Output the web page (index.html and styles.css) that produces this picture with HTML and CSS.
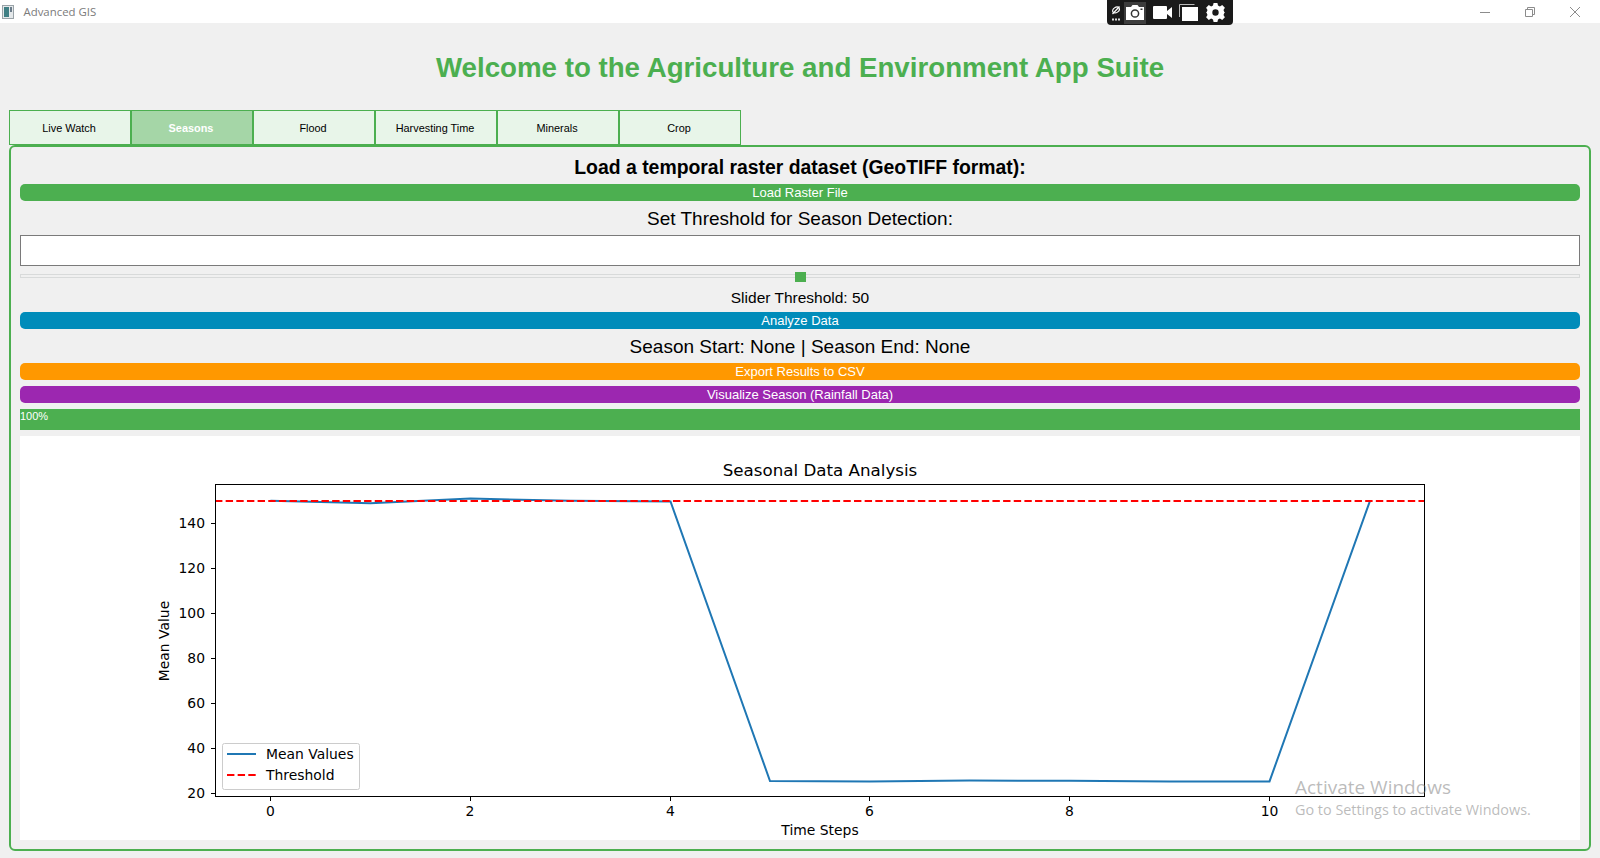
FILE: index.html
```html
<!DOCTYPE html>
<html lang="en">
<head>
    <meta charset="UTF-8">
    <meta name="viewport" content="width=device-width, initial-scale=1.0">
    <title>Advanced GIS</title>
    <link rel="stylesheet" href="styles.css">
</head>
<body>
    <!-- Window title bar -->
    <div class="titlebar">
        <svg class="app-icon" width="12" height="14" viewBox="0 0 12 14">
            <rect x="0.5" y="0.5" width="11" height="13" fill="#e4e8ea" stroke="#9aa3a8"/>
            <rect x="2" y="2" width="5" height="10" fill="#3f7f84"/>
            <rect x="8" y="2" width="2" height="5" fill="#6b7c8a"/>
        </svg>
        <span class="app-name">Advanced GIS</span>
        <div class="window-controls">
            <svg class="win-btn" width="10" height="10" viewBox="0 0 10 10"><path d="M0 5.5H10" stroke="#8c8c8c" fill="none"/></svg>
            <svg class="win-btn" width="10" height="10" viewBox="0 0 10 10"><path d="M0.5 2.5H7.5V9.5H0.5ZM2.5 2.5V0.5H9.5V7.5H7.5" stroke="#8c8c8c" fill="none"/></svg>
            <svg class="win-btn" width="10" height="10" viewBox="0 0 10 10"><path d="M0 0L10 10M10 0L0 10" stroke="#8c8c8c" fill="none"/></svg>
        </div>
    </div>

    <!-- Screen capture toolbar on top of the title bar -->
    <div class="capture-bar">
        <svg class="cap-link" width="10" height="16" viewBox="0 0 10 16">
            <ellipse cx="5" cy="5" rx="3.6" ry="2.6" transform="rotate(-35 5 5)" fill="none" stroke="#fff" stroke-width="1.2"/>
            <path d="M1.5 9L8.5 1.5" stroke="#fff" stroke-width="1.2"/>
            <path d="M1 14.5H3M4 14.5H6M7 14.5H9" stroke="#ddd" stroke-width="2"/>
        </svg>
        <div class="cap-active">
            <svg width="20" height="17" viewBox="0 0 20 17">
                <path d="M1 3H6L7.5 1H12.5L14 3H19V16H1Z" fill="#fff"/>
                <circle cx="10" cy="9.5" r="3.6" fill="none" stroke="#333" stroke-width="1.5"/>
                <rect x="15.5" y="4.5" width="2" height="1.5" fill="#333"/>
            </svg>
        </div>
        <svg width="19" height="13" viewBox="0 0 19 13"><path d="M0 1a1 1 0 0 1 1-1H13a1 1 0 0 1 1 1V12a1 1 0 0 1-1 1H1a1 1 0 0 1-1-1ZM14 5L19 1V12L14 8Z" fill="#fff"/></svg>
        <svg width="20" height="17" viewBox="0 0 20 17"><path d="M0.5 13V0.5H15.5" fill="none" stroke="#bbb"/><rect x="3" y="3" width="16" height="14" fill="#fff"/></svg>
        <svg width="19" height="19" viewBox="0 0 19 19">
            <path fill="#fff" fill-rule="evenodd" d="M7.6 0H11.4L12 2.6L13.9 3.4L16.2 2L18.9 4.7L17.5 7L18.3 8.9L19 9.5V9.5L18.3 10.1L17.5 12L18.9 14.3L16.2 17L13.9 15.6L12 16.4L11.4 19H7.6L7 16.4L5.1 15.6L2.8 17L0.1 14.3L1.5 12L0.7 10.1L0 9.5L0.7 8.9L1.5 7L0.1 4.7L2.8 2L5.1 3.4L7 2.6ZM9.5 6.3a3.2 3.2 0 1 0 0 6.4a3.2 3.2 0 0 0 0-6.4Z"/>
        </svg>
    </div>

    <header class="app-header">
        <h1>Welcome to the Agriculture and Environment App Suite</h1>
    </header>

    <div class="tabs">
        <div class="tab">Live Watch</div>
        <div class="tab tab-active">Seasons</div>
        <div class="tab">Flood</div>
        <div class="tab">Harvesting Time</div>
        <div class="tab">Minerals</div>
        <div class="tab">Crop</div>
    </div>

    <div class="panel">
        <div class="label label-bold">Load a temporal raster dataset (GeoTIFF format):</div>
        <button class="btn btn-green">Load Raster File</button>
        <div class="label">Set Threshold for Season Detection:</div>
        <input class="threshold-input" type="text">
        <div class="slider">
            <div class="groove"><div class="handle"></div></div>
        </div>
        <div class="label label-small">Slider Threshold: 50</div>
        <button class="btn btn-blue">Analyze Data</button>
        <div class="label label-season">Season Start: None | Season End: None</div>
        <button class="btn btn-orange">Export Results to CSV</button>
        <button class="btn btn-purple">Visualize Season (Rainfall Data)</button>
        <div class="progress">100%</div>

        <!-- Plot, numbers read off the axes -->
        <div class="chart">
            <svg width="1560" height="404" viewBox="20 436 1560 404">
                <g class="ticks">
                    <path d="M211 523.5H215M211 568.5H215M211 613.5H215M211 658.5H215M211 703.5H215M211 748.5H215M211 793.5H215"/>
                    <path d="M270.5 797V801M470.5 797V801M670.5 797V801M869.5 797V801M1069.5 797V801M1269.5 797V801"/>
                </g>
                <polyline class="line-mean" points="270.5,500.8 370.5,503.3 470.5,498.6 570.5,500.8 670.5,501.5 770,781 869.5,781.4 969.5,780.6 1069.5,780.8 1169.5,781.4 1269.5,781.4 1370,500.8"/>
                <path class="line-threshold" d="M215 501H1425"/>
                <rect class="frame" x="215.5" y="484.5" width="1209" height="312"/>

                <g class="tick-labels-y">
                    <text x="205" y="528">140</text>
                    <text x="205" y="573">120</text>
                    <text x="205" y="618">100</text>
                    <text x="205" y="663">80</text>
                    <text x="205" y="708">60</text>
                    <text x="205" y="753">40</text>
                    <text x="205" y="798">20</text>
                </g>
                <g class="tick-labels-x">
                    <text x="270.5" y="816">0</text>
                    <text x="470" y="816">2</text>
                    <text x="670.5" y="816">4</text>
                    <text x="869.5" y="816">6</text>
                    <text x="1069.5" y="816">8</text>
                    <text x="1269.5" y="816">10</text>
                </g>
                <text class="chart-title" x="820" y="475.5">Seasonal Data Analysis</text>
                <text class="axis-label" x="820" y="835">Time Steps</text>
                <text class="axis-label" transform="translate(169 641) rotate(-90)">Mean Value</text>

                <rect class="legend-box" x="222.5" y="743.5" width="137" height="46" rx="2"/>
                <path class="line-mean" d="M227 754H256"/>
                <path class="line-threshold" d="M227 775H256"/>
                <text class="legend-text" x="266" y="759">Mean Values</text>
                <text class="legend-text" x="266" y="780">Threshold</text>
            </svg>
        </div>
    </div>

    <!-- Windows watermark -->
    <div class="watermark">
        <div class="wm-big">Activate Windows</div>
        <div class="wm-small">Go to Settings to activate Windows.</div>
    </div>
</body>
</html>
```

FILE: styles.css
```css
body {
    margin: 0;
    padding: 0;
    width: 1600px;
    height: 858px;
    overflow: hidden;
    position: relative;
    background-color: #f0f0f0;
    font-family: "Liberation Sans", Arial, sans-serif;
    color: #000;
}

/* Title bar */
.titlebar {
    height: 23px;
    background-color: #fff;
    display: flex;
    align-items: center;
    padding-left: 2px;
}
.app-icon {
    margin-right: 9.5px;
}
.app-name {
    font-family: "Open Sans", sans-serif;
    font-size: 11.4px;
    color: #7b7b7b;
}
.window-controls {
    margin-left: auto;
    display: flex;
    gap: 35px;
    padding-right: 20px;
}
.win-btn {
    display: block;
}

/* Capture toolbar */
.capture-bar {
    position: absolute;
    top: 0;
    left: 1107px;
    width: 126px;
    height: 25px;
    background-color: #1a1a1a;
    border-radius: 0 0 4px 4px;
    display: flex;
    align-items: center;
    padding-left: 4px;
    box-sizing: border-box;
    gap: 7px;
}
.cap-link {
    margin-right: -4px;
}
.cap-active {
    width: 22px;
    height: 22px;
    background-color: #3d3d3d;
    display: flex;
    align-items: center;
    justify-content: center;
}

/* Header */
.app-header {
    height: 87px;
    padding-top: 2px;
    box-sizing: border-box;
    display: flex;
    align-items: center;
    justify-content: center;
}
.app-header h1 {
    margin: 0;
    font-size: 27.7px;
    font-weight: bold;
    color: #4caf50;
}

/* Tabs */
.tabs {
    display: flex;
    margin-left: 9px;
    height: 35px;
}
.tab {
    width: 122px;
    box-sizing: border-box;
    border: 1px solid #4caf50;
    background-color: #e8f5e9;
    font-size: 10.9px;
    padding-right: 2px;
    display: flex;
    align-items: center;
    justify-content: center;
}
.tab-active {
    background-color: #a5d6a7;
    color: #fff;
    font-weight: bold;
}

/* Main panel */
.panel {
    margin: 0 9px;
    height: 706px;
    box-sizing: border-box;
    border: 2px solid #4caf50;
    border-radius: 6px;
    padding: 0 9px 9px;
    display: flex;
    flex-direction: column;
}
.label {
    height: 34px;
    padding-top: 2px;
    box-sizing: border-box;
    display: flex;
    align-items: center;
    justify-content: center;
    font-size: 19px;
}
.label-bold {
    height: 37px;
    padding-top: 3px;
    font-size: 19.4px;
    font-weight: bold;
}
.label-small {
    height: 30px;
    font-size: 15.5px;
}
.btn {
    display: block;
    width: 100%;
    height: 17px;
    padding: 1px 0 0;
    border: none;
    border-radius: 5px;
    color: #fff;
    font-family: "Liberation Sans", Arial, sans-serif;
    font-size: 13px;
    line-height: 16px;
    flex: none;
}
.btn-green { background-color: #4caf50; }
.btn-blue { background-color: #008cba; }
.btn-orange { background-color: #ff9800; }
.btn-purple { background-color: #9c27b0; margin-top: 6px; }

.threshold-input {
    display: block;
    height: 31px;
    box-sizing: border-box;
    border: 1px solid #7a7a7a;
    background-color: #fff;
    flex: none;
    padding: 0;
}
.slider {
    height: 16px;
    padding-top: 4px;
    box-sizing: border-box;
    display: flex;
    align-items: center;
    flex: none;
}
.groove {
    width: 100%;
    height: 4px;
    box-sizing: border-box;
    border: 1px solid #d8dada;
    display: flex;
    align-items: center;
    justify-content: center;
}
.handle {
    width: 11px;
    height: 10px;
    flex: none;
    margin-top: 2px;
    background-color: #4caf50;
}
.progress {
    height: 21px;
    margin-top: 6px;
    background-color: #4caf50;
    color: #fff;
    font-size: 11px;
    line-height: 15px;
    flex: none;
}
.chart {
    height: 404px;
    margin-top: 6px;
    background-color: #fff;
    flex: none;
}
.chart svg {
    display: block;
}
.chart text {
    font-family: "DejaVu Sans", sans-serif;
    font-size: 13.9px;
    fill: #000;
}
.ticks path {
    stroke: #000;
    stroke-width: 1;
    fill: none;
}
.frame {
    fill: none;
    stroke: #000;
    stroke-width: 1;
}
.line-mean {
    fill: none;
    stroke: #1f77b4;
    stroke-width: 2;
}
.line-threshold {
    fill: none;
    stroke: #ff0000;
    stroke-width: 2;
    stroke-dasharray: 7.4 3.25;
}
.tick-labels-y text {
    text-anchor: end;
}
.tick-labels-x text,
.axis-label {
    text-anchor: middle;
}
.chart .chart-title {
    text-anchor: middle;
    font-size: 16.7px;
}
.legend-box {
    fill: #fff;
    fill-opacity: 0.8;
    stroke: #ccc;
    stroke-width: 1;
}

/* Windows watermark */
.watermark {
    position: absolute;
    left: 1295px;
    top: 774px;
    font-family: "Open Sans", sans-serif;
    color: rgba(120, 120, 120, 0.5);
    pointer-events: none;
}
.wm-big {
    font-size: 19px;
    line-height: 26px;
}
.wm-small {
    font-size: 14.4px;
    line-height: 20px;
}
```
